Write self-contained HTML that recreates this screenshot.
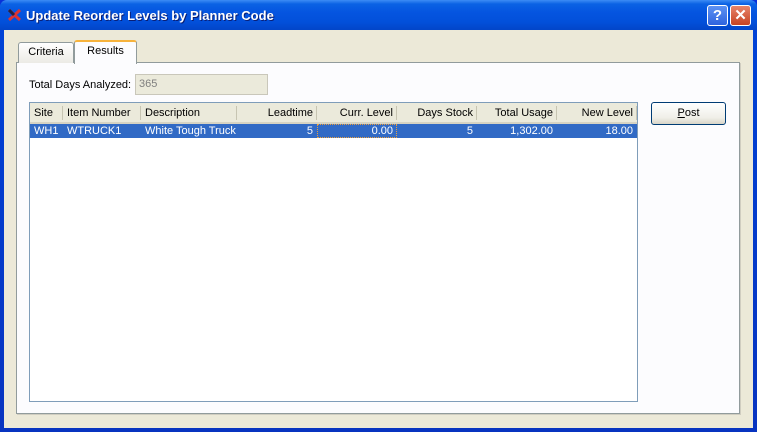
<!DOCTYPE html>
<html><head><style>
*{margin:0;padding:0;box-sizing:border-box}
body{width:757px;height:432px;overflow:hidden;font-family:Tahoma,"Liberation Sans",sans-serif;font-size:11px;background:#0831d9;position:relative}
.win{position:absolute;left:0;top:0;width:757px;height:432px;background:linear-gradient(#0a5fe0,#0042d6 30px,#0834c0);border-radius:7px 7px 0 0}
.title{position:absolute;left:0;top:0;width:757px;height:30px;background:linear-gradient(#3d8cf5 0,#0b62e4 4px,#0555e0 12px,#0250da 22px,#0245c8 30px);border-radius:7px 7px 0 0}
.title span{position:absolute;left:26px;top:8px;color:#fff;font-weight:bold;font-size:13px;font-family:"Liberation Sans",sans-serif;text-shadow:1px 1px #0a1e74}
.body{position:absolute;left:4px;top:30px;width:749px;height:398px;background:#ece9d8}
.btn{position:absolute;top:5px;width:21px;height:21px;border:1px solid #fff;border-radius:3px;color:#fff;font-weight:bold;text-align:center;font-size:15px;line-height:19px;font-family:"Liberation Sans",sans-serif}
.panel{position:absolute;left:16px;top:62px;width:724px;height:352px;background:#fcfcfe;border:1px solid #919b9c;box-shadow:1px 1px 0 #d0cdc0}
.tab{position:absolute;height:21px;border:1px solid #919b9c;border-bottom:none;border-radius:3px 3px 0 0;text-align:center;line-height:19px}
.grid{position:absolute;left:29px;top:102px;width:609px;height:300px;border:1px solid #7f9db9;background:#fff}
.hd{position:absolute;top:0;height:21px;line-height:21px;background:#ebeadb;border-bottom:2px solid #d6d3c3;padding:0 4px}
.hd:after{content:"";position:absolute;right:0;top:3px;height:14px;border-right:1px solid #c7c5b2}
.c{position:absolute;top:21px;height:14px;line-height:14px;color:#fff;padding:0 4px}
.r{text-align:right}
</style></head><body>
<div class="win"></div>
<div class="title"><svg style="position:absolute;left:8px;top:9px" width="13" height="12"><path d="M1 1L12 11M12 1L1 11" stroke="#d33" stroke-width="3"/><path d="M1 1L6 6" stroke="#224" stroke-width="3"/></svg><span>Update Reorder Levels by Planner Code</span>
<div class="btn" style="left:707px;background:linear-gradient(#5d92f3,#2e63de)">?</div>
<div class="btn" style="left:730px;background:linear-gradient(#e8846a,#c64322)">✕</div></div>
<div class="body"></div>
<div class="panel"></div>
<div class="tab" style="left:18px;top:42px;width:56px;background:linear-gradient(#fff,#ecebe5)">Criteria</div>
<div class="tab" style="left:74px;top:40px;width:63px;height:24px;background:#fcfcfe;border-top:2px solid #f7b33c">Results</div>
<div style="position:absolute;left:29px;top:79px">Total Days Analyzed:</div>
<div style="position:absolute;left:135px;top:74px;width:133px;height:21px;border:1px solid #c9c7ba;background:#ebeadb;color:#7f7f7f;line-height:19px;padding-left:3px">365</div>
<div class="grid">
<div class="hd" style="left:0;width:33px">Site</div>
<div class="hd" style="left:33px;width:78px">Item Number</div>
<div class="hd" style="left:111px;width:96px">Description</div>
<div class="hd r" style="left:207px;width:80px">Leadtime</div>
<div class="hd r" style="left:287px;width:80px">Curr. Level</div>
<div class="hd r" style="left:367px;width:80px">Days Stock</div>
<div class="hd r" style="left:447px;width:80px">Total Usage</div>
<div class="hd r" style="left:527px;width:80px">New Level</div>
<div style="position:absolute;left:0;top:21px;width:607px;height:14px;background:#316ac5"></div>
<div class="c" style="left:0">WH1</div>
<div class="c" style="left:33px">WTRUCK1</div>
<div class="c" style="left:111px">White Tough Truck</div>
<div class="c r" style="left:207px;width:80px">5</div>
<div class="c r" style="left:287px;width:80px;outline:1px dotted #e8a040;outline-offset:-1px">0.00</div>
<div class="c r" style="left:367px;width:80px">5</div>
<div class="c r" style="left:447px;width:80px">1,302.00</div>
<div class="c r" style="left:527px;width:80px">18.00</div>
</div>
<div style="position:absolute;left:651px;top:102px;width:75px;height:23px;border:1px solid #003c74;border-radius:3px;background:linear-gradient(#fff,#f0efe8 70%,#d8d5c8);text-align:center;line-height:21px"><u>P</u>ost</div>
</body></html>
